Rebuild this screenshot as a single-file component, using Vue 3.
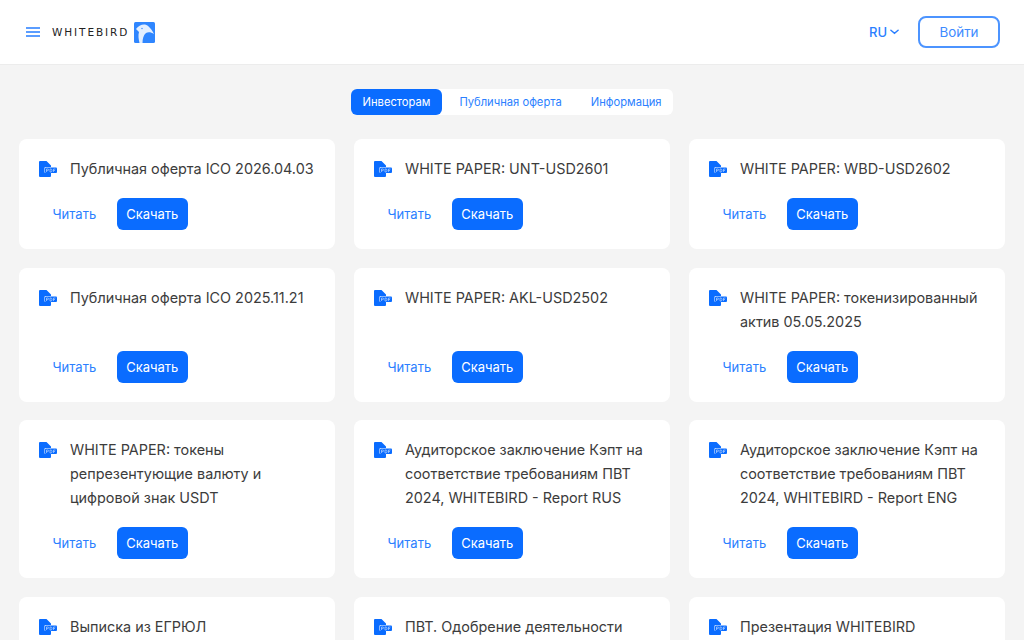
<script setup>
const tabs = ['Инвесторам', 'Публичная оферта', 'Информация']

const docs = [
  'Публичная оферта ICO 2026.04.03',
  'WHITE PAPER: UNT-USD2601',
  'WHITE PAPER: WBD-USD2602',
  'Публичная оферта ICO 2025.11.21',
  'WHITE PAPER: AKL-USD2502',
  'WHITE PAPER: токенизированный актив 05.05.2025',
  'WHITE PAPER: токены репрезентующие валюту и цифровой знак USDT',
  'Аудиторское заключение Кэпт на соответствие требованиям ПВТ 2024, WHITEBIRD - Report RUS',
  'Аудиторское заключение Кэпт на соответствие требованиям ПВТ 2024, WHITEBIRD - Report ENG',
  'Выписка из ЕГРЮЛ',
  'ПВТ. Одобрение деятельности',
  'Презентация WHITEBIRD'
]
</script>

<template>
  <div class="page">
    <header class="header">
      <button class="burger" aria-label="Меню">
        <span></span><span></span><span></span>
      </button>
      <div class="logo">
        <span class="logo-text">WHITEBIRD</span>
        <svg class="logo-mark" viewBox="0 0 21 21" width="21" height="21">
          <rect width="21" height="21" rx="1.5" fill="#2f86ff" />
          <path d="M2 7C4 4 8 2 11 2.5C15 3.5 18 8 20 12C17 10 14 10 12 11C9.5 13 8.5 17 8.5 21L5.5 21C4.5 17 4 13 5 10C4 9 3 8 2 7Z" fill="#e3efff" />
          <circle cx="8" cy="6.5" r=".7" fill="#2f86ff" />
        </svg>
      </div>
      <div class="header-right">
        <button class="lang">
          RU
          <svg viewBox="0 0 10 6" width="9" height="6">
            <path d="M1 1l4 3.5L9 1" fill="none" stroke="#2b7fff" stroke-width="1.6" stroke-linecap="round" />
          </svg>
        </button>
        <button class="login">Войти</button>
      </div>
    </header>

    <main class="content">
      <nav class="tabs">
        <button v-for="(tab, i) in tabs" :key="tab" class="tab" :class="{ active: i === 0 }">{{ tab }}</button>
      </nav>

      <div class="grid">
        <div v-for="doc in docs" :key="doc" class="card">
          <div class="card-head">
            <svg class="pdf" viewBox="0 0 18 16" width="18" height="16">
              <path d="M0 1a1 1 0 0 1 1-1h6.5L12 4.5V6H6.5a1 1 0 0 0-1 1v4a1 1 0 0 0 1 1H12v3a1 1 0 0 1-1 1H1a1 1 0 0 1-1-1z" fill="#0a6cff" />
              <rect x="6" y="6.5" width="12" height="5.5" rx="1" fill="#0a6cff" />
              <path d="M7.5 11V8h1.2a.8.8 0 0 1 0 1.6H7.5M11 8v3h.8a1.2 1.5 0 0 0 0-3zM14.5 11V8h2M14.5 9.5h1.5" fill="none" stroke="#cfe2ff" stroke-width=".6" />
            </svg>
            <span class="title">{{ doc }}</span>
          </div>
          <div class="actions">
            <button class="read">Читать</button>
            <button class="download">Скачать</button>
          </div>
        </div>
      </div>
    </main>
  </div>
</template>

<style scoped>
.page {
  height: 640px;
  overflow: hidden;
  background: #f4f4f4;
  font-family: Inter, "Noto Sans", sans-serif;
}
button {
  font-family: inherit;
  cursor: pointer;
  background: none;
  border: none;
  padding: 0;
}
.header {
  display: flex;
  align-items: center;
  height: 64px;
  padding: 0 24px 0 26px;
  background: #fff;
  border-bottom: 1px solid #ececec;
}
.burger {
  display: flex;
  flex-direction: column;
  gap: 2.5px;
  width: 14px;
  margin-right: 12px;
}
.burger span {
  height: 1.8px;
  background: #5b9dff;
}
.logo {
  display: flex;
  align-items: center;
  gap: 5px;
}
.logo-text {
  font-family: "DejaVu Sans", sans-serif;
  font-size: 10.5px;
  letter-spacing: 1.9px;
  color: #222;
}
.logo-mark {
  display: block;
}
.header-right {
  display: flex;
  align-items: center;
  margin-left: auto;
}
.lang {
  display: flex;
  align-items: center;
  gap: 3px;
  margin-right: 19px;
  font-size: 13px;
  font-weight: 500;
  color: #2b7fff;
}
.login {
  width: 82px;
  height: 32px;
  border: 2px solid #4c94ff;
  border-radius: 8px;
  font-size: 13.4px;
  color: #3d8bff;
}
.content {
  padding: 24px 19px 0;
}
.tabs {
  display: flex;
  width: max-content;
  margin: 0 auto 24px;
  background: #fff;
  border-radius: 6px;
}
.tab {
  height: 26px;
  padding: 0 12px 1px;
  margin-right: 5px;
  border-radius: 6px;
  font-size: 11.2px;
  color: #2b7fff;
}
.tab:last-child {
  margin-right: 0;
}
.tab.active {
  background: #0a6cff;
  color: #fff;
}
.grid {
  display: grid;
  grid-template-columns: repeat(3, 1fr);
  gap: 18.5px 19px;
}
.card {
  display: flex;
  flex-direction: column;
  justify-content: space-between;
  gap: 17px;
  padding: 18px 16px 19px 20px;
  background: #fff;
  border-radius: 8px;
}
.card-head {
  display: flex;
  align-items: flex-start;
  gap: 13px;
}
.pdf {
  flex: none;
  margin-top: 4px;
}
.title {
  font-size: 14.4px;
  line-height: 24px;
  color: #3c3c3c;
}
.actions {
  display: flex;
  align-items: center;
  gap: 11px;
}
.read,
.download {
  height: 32px;
  padding: 0 9.5px;
  border-radius: 6px;
  font-size: 13px;
}
.read {
  margin-left: 4px;
  color: #2b7fff;
}
.download {
  background: #0a6cff;
  color: #fff;
}
</style>

<style>
html, body {
  overflow: hidden;
}
</style>
